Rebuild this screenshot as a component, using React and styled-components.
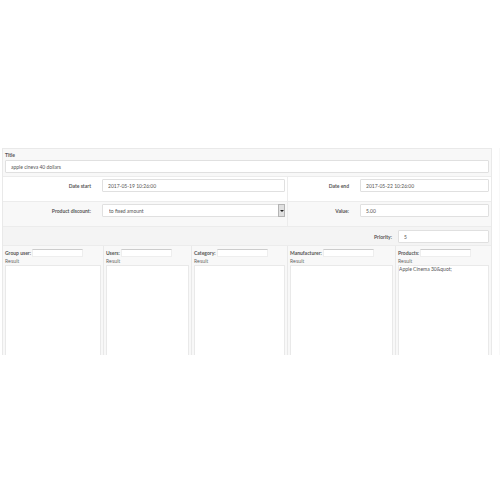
import styled, { createGlobalStyle } from 'styled-components'

const GlobalStyle = createGlobalStyle`
    * {
        box-sizing: border-box;
    }
    body {
        margin: 0;
        background: #fff;
        color: #555;
        font: 5px/8px Lato, "Open Sans", sans-serif;
    }
    input, select, button {
        font: inherit;
        color: inherit;
    }
`

const Page = styled.main`
    margin-top: 148px;
    padding-inline-end: 1px;
    border-inline-end: 1px solid #f8f8f8;
`

const Form = styled.form`
    margin-inline: 2px 6px;
    border: 1px solid #e9e9e9;
    border-block-end: none;
`

const Row = styled.div`
    display: grid;
    grid-template-columns: ${props => props.$columns};
    background: ${props => props.$background || '#f8f8f8'};
    border-block-end: 1px solid #ececec;
    &:last-child {
        border-block-end: none;
    }
`

const TitleCell = styled.div`
    display: flex;
    flex-direction: column;
    gap: 1px;
    padding: 2px 2px 3px;
`

const Label = styled.label`
    font-weight: 700;
    color: #555;
`

const FieldCell = styled.div`
    display: grid;
    grid-template-columns: ${props => props.$columns};
    column-gap: ${props => props.$gap || '11px'};
    align-items: center;
    padding: ${props => props.$padding || '2px 2px 9px'};
    min-width: 0;
    border-inline-start: 1px solid #ececec;
    &:first-child {
        border-inline-start: none;
    }
    ${Label} {
        text-align: end;
    }
`

const Input = styled.input`
    width: 100%;
    min-width: 0;
    height: 13px;
    padding: 0 5px;
    background: #fff;
    border: 1px solid #e0e0e0;
    border-radius: 1px;
    outline: none;
`

const SelectBox = styled.div`
    position: relative;
    select {
        display: block;
        appearance: none;
        width: 100%;
        height: 13px;
        padding: 0 12px 0 6px;
        background: #fff;
        border: 1px solid #e0e0e0;
        border-radius: 1px;
        outline: none;
    }
    .arrow {
        position: absolute;
        inset-block: 0;
        inset-inline-end: 0;
        width: 7px;
        display: grid;
        place-items: center;
        background: #e0e0e0;
        border: 1px solid #b4b4b4;
        pointer-events: none;
    }
    .arrow::after {
        content: '';
        border: 2px solid transparent;
        border-block-start-color: #222;
        border-block-end: none;
    }
`

const Filter = styled.section`
    min-width: 0;
    padding: 3px 2px 0;
    border-inline-start: 1px solid #e9e9e9;
    &:first-child {
        border-inline-start: none;
    }
    .search {
        display: flex;
        align-items: center;
        gap: 1px;
    }
    input {
        width: 51px;
        height: 8px;
        padding: 0 2px;
        background: #fff;
        border: 1px solid #eee;
        border-block-start-color: #ccc;
        outline: none;
    }
    .result {
        height: 8px;
        font-family: "Open Sans", sans-serif;
    }
    ul {
        height: 90px;
        margin: 0;
        padding: 0;
        list-style: none;
        overflow: auto;
        background: #fff;
        border: 1px solid #e9e9e9;
        border-block-end: none;
    }
    li {
        line-height: 6px;
    }
`

const filters = [
    { id: 'group', name: 'Group user:', results: [] },
    { id: 'users', name: 'Users:', results: [] },
    { id: 'category', name: 'Category:', results: [] },
    { id: 'manufacturer', name: 'Manufacturer:', results: [] },
    { id: 'products', name: 'Products:', results: ['Apple Cinema 30&quot;'] },
]

function Field(props) {
    return (
        <FieldCell $columns={props.columns} $gap={props.gap} $padding={props.padding}>
            <Label htmlFor={props.id}>{props.label}</Label>
            {props.children || <Input id={props.id} defaultValue={props.value} />}
        </FieldCell>
    )
}

function App() {
    return (
        <>
            <GlobalStyle />
            <Page>
                <Form>
                    <Row $columns="1fr">
                        <TitleCell>
                            <Label htmlFor="title">Title</Label>
                            <Input id="title" defaultValue="apple cineva 40 dollars" />
                        </TitleCell>
                    </Row>
                    <Row $columns="284fr 204fr" $background="#fff">
                        <Field id="date-start" label="Date start" value="2017-05-19 10:26:00" columns="86fr 183fr" />
                        <Field id="date-end" label="Date end" value="2017-05-22 10:26:00" columns="59fr 129fr" />
                    </Row>
                    <Row $columns="284fr 204fr">
                        <Field id="discount" label="Product discount:" columns="86fr 183fr">
                            <SelectBox>
                                <select id="discount">
                                    <option>to fixed amount</option>
                                </select>
                                <span className="arrow" />
                            </SelectBox>
                        </Field>
                        <Field id="value" label="Value:" value="5.00" columns="59fr 129fr" />
                    </Row>
                    <Row $columns="1fr" $background="#f4f4f4">
                        <Field id="priority" label="Priority:" value="5" columns="387fr 91fr" gap="6px" padding="3px 2px 2px" />
                    </Row>
                    <Row $columns="100fr 88fr 96fr 108fr 96fr">
                        {filters.map(item => (
                            <Filter key={item.id}>
                                <div className="search">
                                    <Label htmlFor={item.id}>{item.name}</Label>
                                    <input id={item.id} />
                                </div>
                                <div className="result">Result</div>
                                <ul>
                                    {item.results.map(result => <li key={result}>{result}</li>)}
                                </ul>
                            </Filter>
                        ))}
                    </Row>
                </Form>
            </Page>
        </>
    )
}

export default App
